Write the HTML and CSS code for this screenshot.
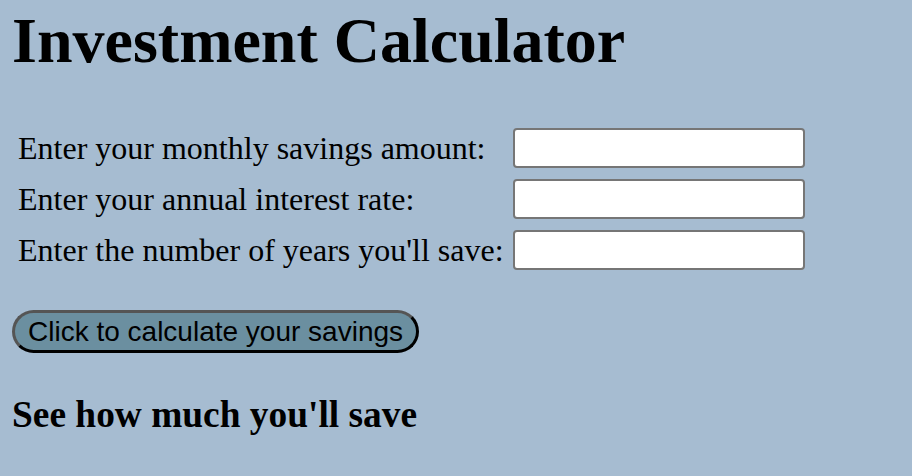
FILE: index.html
```html
<!DOCTYPE html>
<html lang="en">
<head>
<meta charset="utf-8">
<title>Investment Calculator</title>
<link rel="stylesheet" href="styles.css">
</head>
<body>
<h1 class="title">Investment Calculator</h1>
<form class="calc">
  <div class="fields">
    <label class="label" for="monthly">Enter your monthly savings amount:</label>
    <input class="field" id="monthly" type="text">
    <label class="label" for="rate">Enter your annual interest rate:</label>
    <input class="field" id="rate" type="text">
    <label class="label" for="years">Enter the number of years you'll save:</label>
    <input class="field" id="years" type="text">
  </div>
  <button class="calc-btn" type="button">Click to calculate your savings</button>
</form>
<h3 class="result">See how much you'll save</h3>
</body>
</html>
```
FILE: styles.css
```css
html, body {
  margin: 0;
  padding: 0;
}
body {
  background: #a6bcd1;
  font-family: "Liberation Serif", "Times New Roman", serif;
  color: #000;
  padding: 0 12px;
}
.title {
  font-size: 64px;
  font-weight: bold;
  line-height: 74px;
  margin: 4px 0 0 0;
}
.calc {
  margin: 0;
  padding: 0;
}
.fields {
  display: grid;
  grid-template-columns: auto 292px;
  column-gap: 9px;
  row-gap: 11px;
  align-items: center;
  justify-content: start;
  margin-top: 50px;
  padding-left: 6px;
}
.label {
  font-size: 32px;
  line-height: 36px;
}
.field {
  box-sizing: border-box;
  width: 292px;
  height: 40px;
  margin: 0;
  background: #fff;
  border: 2px solid #767676;
  border-radius: 4px;
  font-size: 26px;
}
.calc-btn {
  display: block;
  box-sizing: border-box;
  margin: 40px 0 0 0;
  height: 43px;
  padding: 0 13px;
  font-family: "Liberation Sans", Arial, sans-serif;
  font-size: 28px;
  color: #000;
  background: #6b8fa0;
  border: 3px solid;
  border-color: #555 #000 #000 #555;
  border-radius: 22px;
}
.result {
  font-size: 37.4px;
  font-weight: bold;
  margin: 40px 0 0 0;
  line-height: 43px;
}
```
